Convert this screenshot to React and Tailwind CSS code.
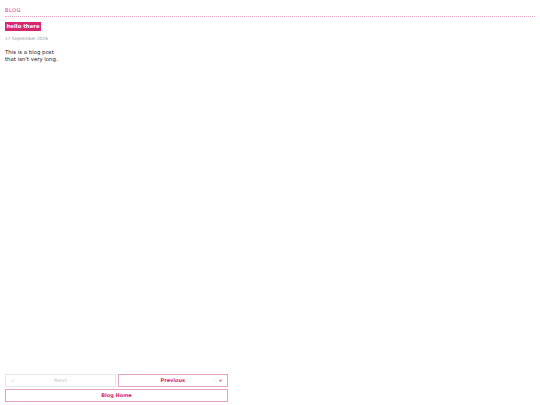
import React from 'react';

const font = { fontFamily: '"DejaVu Sans", Verdana, sans-serif' };

export default function App() {
  return (
    <div className="flex h-[405px] flex-col px-[5px] text-[#222]" style={font}>
      <header className="pt-[7px]">
        <div className="text-[5.2px] leading-[7px] tracking-[0.4px] text-[#d6397a]">BLOG</div>
        <div className="mt-[1.5px] border-b border-dotted border-[#e2a3c0]" />
      </header>

      <main className="flex-1 text-[5px]">
        <h1 className="mt-[5px] w-fit bg-[#d6266d] px-[1.5px] py-[1.5px] text-[5.4px] font-bold leading-[6px] text-white">
          hello there
        </h1>
        <div className="mt-[5px] text-[4.3px] leading-[6px] text-[#999]">17 September 2026</div>
        <p className="mt-[7px] text-[5.4px] leading-[7px] text-[#1a1a1a]">
          This is a blog post
          <br />
          that isn't very long.
        </p>
      </main>

      <nav className="mb-[3px] flex w-[223px] flex-col gap-[2px] text-[5px] font-bold">
        <div className="flex gap-[2px]">
          <button className="relative flex h-[13px] flex-1 items-center justify-center border border-[#e8e8e8] text-[#dcdcdc]">
            <span className="absolute left-[5px]">«</span>
            Next
          </button>
          <button className="relative flex h-[13px] flex-1 items-center justify-center border border-[#e2a3c0] text-[#d6266d]">
            Previous
            <span className="absolute right-[5px]">»</span>
          </button>
        </div>
        <button className="flex h-[13px] items-center justify-center border border-[#e2a3c0] text-[#d6266d]">
          Blog Home
        </button>
      </nav>
    </div>
  );
}
